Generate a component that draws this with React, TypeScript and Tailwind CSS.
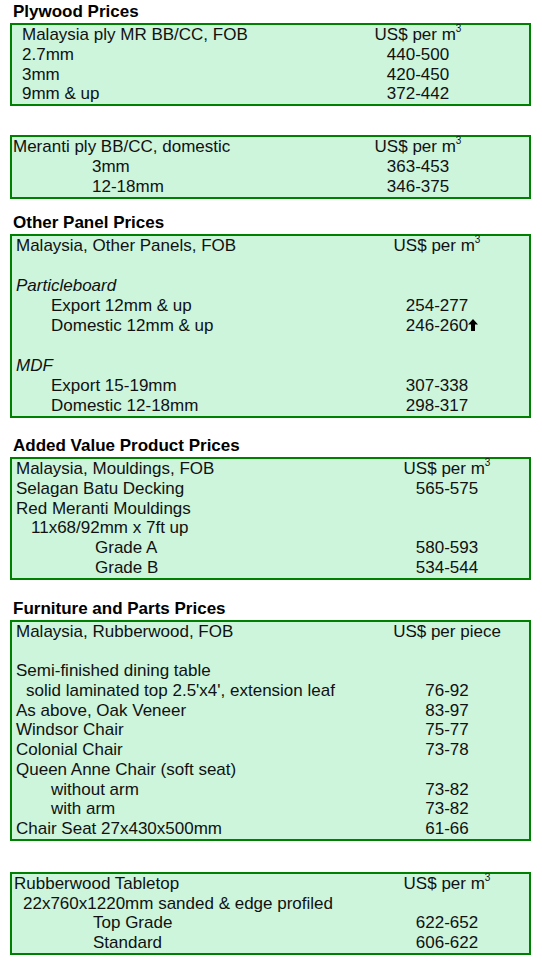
import React from 'react';

type Row = {
  label?: string;
  pad?: string;
  value?: string;
  unit?: 'm3' | 'piece';
  italic?: boolean;
  arrow?: boolean;
};

type Box = {
  title?: string;
  titleGap?: string;
  boxGap: string;
  valueCol: string;
  rowH: string;
  rows: Row[];
};

const boxes: Box[] = [
  {
    title: 'Plywood Prices',
    titleGap: 'mt-[2px]',
    boxGap: 'mt-[1px]',
    valueCol: 'w-[222px]',
    rowH: 'h-[19.75px] leading-[19.75px]',
    rows: [
      { label: 'Malaysia ply MR BB/CC, FOB', pad: 'pl-[10px]', unit: 'm3' },
      { label: '2.7mm', pad: 'pl-[10px]', value: '440-500' },
      { label: '3mm', pad: 'pl-[10px]', value: '420-450' },
      { label: '9mm & up', pad: 'pl-[10px]', value: '372-442' },
    ],
  },
  {
    boxGap: 'mt-[29px]',
    valueCol: 'w-[222px]',
    rowH: 'h-[20px] leading-[20px]',
    rows: [
      { label: 'Meranti ply BB/CC, domestic', pad: 'pl-[1px]', unit: 'm3' },
      { label: '3mm', pad: 'pl-[80px]', value: '363-453' },
      { label: '12-18mm', pad: 'pl-[80px]', value: '346-375' },
    ],
  },
  {
    title: 'Other Panel Prices',
    titleGap: 'mt-[14px]',
    boxGap: 'mt-[1px]',
    valueCol: 'w-[184px]',
    rowH: 'h-[20px] leading-[20px]',
    rows: [
      { label: 'Malaysia, Other Panels, FOB', pad: 'pl-[4px]', unit: 'm3' },
      {},
      { label: 'Particleboard', pad: 'pl-[4px]', italic: true },
      { label: 'Export 12mm & up', pad: 'pl-[39px]', value: '254-277' },
      { label: 'Domestic 12mm & up', pad: 'pl-[39px]', value: '246-260', arrow: true },
      {},
      { label: 'MDF', pad: 'pl-[4px]', italic: true },
      { label: 'Export 15-19mm', pad: 'pl-[39px]', value: '307-338' },
      { label: 'Domestic 12-18mm', pad: 'pl-[39px]', value: '298-317' },
    ],
  },
  {
    title: 'Added Value Product Prices',
    titleGap: 'mt-[18px]',
    boxGap: 'mt-[1px]',
    valueCol: 'w-[164px]',
    rowH: 'h-[19.75px] leading-[19.75px]',
    rows: [
      { label: 'Malaysia, Mouldings, FOB', pad: 'pl-[4px]', unit: 'm3' },
      { label: 'Selagan Batu Decking', pad: 'pl-[4px]', value: '565-575' },
      { label: 'Red Meranti Mouldings', pad: 'pl-[4px]' },
      { label: '11x68/92mm x 7ft up', pad: 'pl-[19px]' },
      { label: 'Grade A', pad: 'pl-[83px]', value: '580-593' },
      { label: 'Grade B', pad: 'pl-[83px]', value: '534-544' },
    ],
  },
  {
    title: 'Furniture and Parts Prices',
    titleGap: 'mt-[19px]',
    boxGap: 'mt-[1px]',
    valueCol: 'w-[164px]',
    rowH: 'h-[19.75px] leading-[19.75px]',
    rows: [
      { label: 'Malaysia, Rubberwood, FOB', pad: 'pl-[4px]', unit: 'piece' },
      {},
      { label: 'Semi-finished dining table', pad: 'pl-[4px]' },
      { label: "solid laminated top 2.5'x4', extension leaf", pad: 'pl-[14px]', value: '76-92' },
      { label: 'As above, Oak Veneer', pad: 'pl-[4px]', value: '83-97' },
      { label: 'Windsor Chair', pad: 'pl-[4px]', value: '75-77' },
      { label: 'Colonial Chair', pad: 'pl-[4px]', value: '73-78' },
      { label: 'Queen Anne Chair (soft seat)', pad: 'pl-[4px]' },
      { label: 'without arm', pad: 'pl-[39px]', value: '73-82' },
      { label: 'with arm', pad: 'pl-[39px]', value: '73-82' },
      { label: 'Chair Seat 27x430x500mm', pad: 'pl-[4px]', value: '61-66' },
    ],
  },
  {
    boxGap: 'mt-[31px]',
    valueCol: 'w-[164px]',
    rowH: 'h-[19.75px] leading-[19.75px]',
    rows: [
      { label: 'Rubberwood Tabletop', pad: 'pl-[2px]', unit: 'm3' },
      { label: '22x760x1220mm sanded & edge profiled', pad: 'pl-[11px]' },
      { label: 'Top Grade', pad: 'pl-[81px]', value: '622-652' },
      { label: 'Standard', pad: 'pl-[81px]', value: '606-622' },
    ],
  },
];

const UpArrow = () => (
  <svg width="10" height="12" viewBox="0 0 10 12" className="absolute left-full top-[3px]">
    <polygon points="5,0 10,5.5 7,5.5 7,12 3,12 3,5.5 0,5.5" fill="#000" />
  </svg>
);

const Value = ({ row }: { row: Row }) => {
  if (row.unit === 'm3') {
    return (
      <span>
        US$ per m<sup className="relative -top-[8px] text-[10px]">3</sup>
      </span>
    );
  }
  if (row.unit === 'piece') return <span>US$ per piece</span>;
  if (!row.value) return null;
  return (
    <span className="relative">
      {row.value}
      {row.arrow && <UpArrow />}
    </span>
  );
};

const PriceBox = ({ box }: { box: Box }) => (
  <div className={`${box.boxGap} ml-[10px] w-[521px] border-2 border-[#008000] bg-[#ccf5dc]`}>
    {box.rows.map((row, i) => (
      <div key={i} className={`flex ${box.rowH} items-center whitespace-nowrap`}>
        <div className={`flex-1 ${row.pad ?? ''} ${row.italic ? 'italic' : ''}`}>{row.label}</div>
        <div className={`${box.valueCol} text-center`}>
          <Value row={row} />
        </div>
      </div>
    ))}
  </div>
);

export default function App() {
  return (
    <div className="min-h-[964px] w-[542px] bg-white font-['Liberation_Sans',Arial,sans-serif] text-[17px] text-[#111]">
      {boxes.map((box, i) => (
        <section key={i}>
          {box.title && (
            <h2 className={`${box.titleGap} pl-[13px] text-[17px] font-bold leading-[20px] text-black`}>
              {box.title}
            </h2>
          )}
          <PriceBox box={box} />
        </section>
      ))}
    </div>
  );
}
